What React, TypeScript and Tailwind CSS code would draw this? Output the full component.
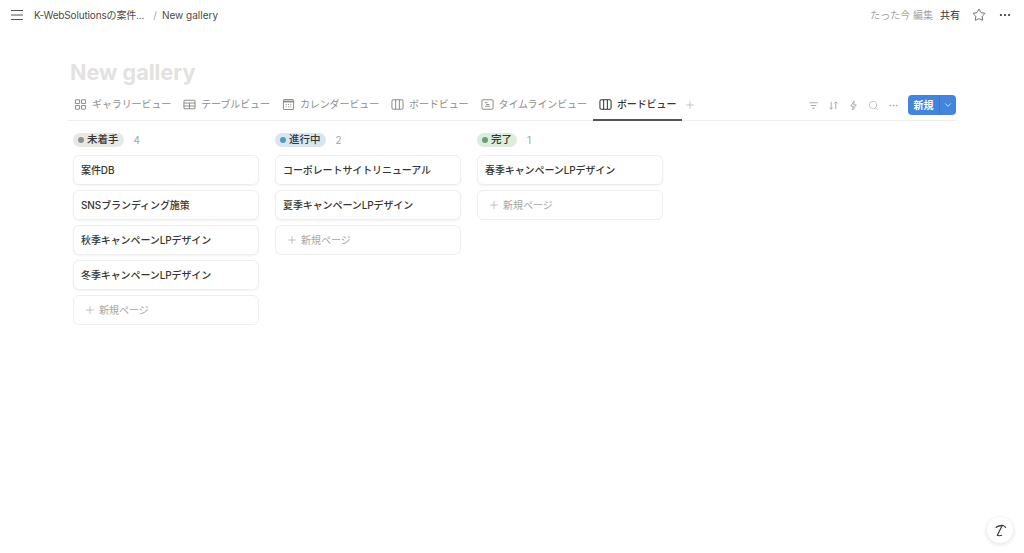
import React from "react";
import { Star, MoreHorizontal, Plus, ChevronDown, Search } from "lucide-react";

function Columns() {
  return (
    <svg viewBox="0 0 14 14" width="13" height="13" fill="none" stroke="currentColor" strokeWidth="1.1">
      <rect x="1" y="2" width="12" height="10" rx="1.6" />
      <path d="M5 2v10M9 2v10" />
    </svg>
  );
}
function Gallery() {
  return (
    <svg viewBox="0 0 14 14" width="13" height="13" fill="none" stroke="currentColor" strokeWidth="1.1">
      <rect x="1.5" y="2" width="4.5" height="4" rx="1" />
      <rect x="8" y="2" width="4.5" height="4" rx="1" />
      <rect x="1.5" y="8" width="4.5" height="4" rx="1" />
      <rect x="8" y="8" width="4.5" height="4" rx="1" />
    </svg>
  );
}
function TableIcon() {
  return (
    <svg viewBox="0 0 14 14" width="13" height="13" fill="none" stroke="currentColor" strokeWidth="1.1">
      <rect x="1" y="2.5" width="12" height="9" rx="1.4" />
      <path d="M1 5.5h12M1 8.5h12M7 5.5v6" />
    </svg>
  );
}
function Calendar() {
  return (
    <svg viewBox="0 0 14 14" width="13" height="13" fill="none" stroke="currentColor" strokeWidth="1.1">
      <rect x="1.5" y="1.5" width="11" height="11" rx="1.5" />
      <path d="M1.5 3.8h11" strokeWidth="2" />
      <path d="M4 7h1M6.5 7h1M9 7h1M4 9.5h1M6.5 9.5h1M9 9.5h1" />
    </svg>
  );
}
function Timeline() {
  return (
    <svg viewBox="0 0 14 14" width="13" height="13" fill="none" stroke="currentColor" strokeWidth="1.1">
      <rect x="1" y="2" width="12" height="10" rx="1.6" />
      <path d="M4 5h3M5.5 7h3.5M4.5 9h5" />
    </svg>
  );
}
function Filter() {
  return (
    <svg viewBox="0 0 12 12" width="11" height="11" fill="none" stroke="currentColor" strokeWidth="1">
      <path d="M1.5 3h9M3 6h6M4.5 9h3" />
    </svg>
  );
}
function Sort() {
  return (
    <svg viewBox="0 0 12 12" width="11" height="11" fill="none" stroke="currentColor" strokeWidth="1">
      <path d="M3.5 2v8M1.8 8.2 3.5 10l1.7-1.8M8.5 10V2M6.8 3.8 8.5 2l1.7 1.8" />
    </svg>
  );
}
function Bolt() {
  return (
    <svg viewBox="0 0 12 12" width="11" height="11" fill="none" stroke="currentColor" strokeWidth="1">
      <path d="M6.8 1 3 6.7h2.6L5 11l4-5.7H6.3z" />
    </svg>
  );
}
function Tab({ icon, label, active }: { icon: React.ReactNode; label: string; active?: boolean }) {
  return (
    <div className={`h-[30px] px-[6px] flex items-center gap-[5px] text-[10px] tracking-[-0.1px] border-b-2 -mb-px ${active ? "border-[#55534e] text-[#37352f] font-medium" : "border-transparent text-[#8f8e8a]"}`}>
      {icon}
      <span>{label}</span>
    </div>
  );
}
function Card({ title }: { title: string }) {
  return (
    <div className="h-[30px] rounded-[6px] border border-[#efeeec] shadow-[0_1px_2px_rgba(15,15,15,0.05)] bg-white flex items-center pl-[7px] text-[10px] font-medium tracking-[-0.1px] text-[#37352f]">
      {title}
    </div>
  );
}
function NewPage() {
  return (
    <div className="h-[30px] rounded-[6px] border border-[#efeeec] bg-white flex items-center pl-[10px] gap-[3px] text-[10px] text-[#a5a4a0]">
      <Plus size={12} strokeWidth={1.3} />
      <span>新規ページ</span>
    </div>
  );
}
function Column({ label, count, pill, dot, items }: { label: string; count: number; pill: string; dot: string; items: string[] }) {
  return (
    <div className="w-[186px] flex flex-col gap-[5px]">
      <div className="h-[20px] flex items-center">
        <div className={`h-[14px] px-[5px] rounded-full flex items-center gap-[3px] text-[10.5px] font-medium text-[#37352f] ${pill}`}>
          <span className={`w-[6px] h-[6px] rounded-full ${dot}`} />
          <span>{label}</span>
        </div>
        <span className="ml-[10px] text-[10px] text-[#a5a4a0]">{count}</span>
      </div>
      {items.map((t) => (
        <Card key={t} title={t} />
      ))}
      <NewPage />
    </div>
  );
}

export default function App() {
  return (
    <div className="w-[1024px] h-[553px] bg-white relative overflow-hidden font-['Inter','Noto_Sans_CJK_JP',sans-serif]">
      <header className="h-[30px] flex items-center pl-[11px] pr-[12px] text-[#37352f]">
        <svg viewBox="0 0 12 12" width="12" height="12" fill="none" stroke="#55534e" strokeWidth="1">
          <path d="M0 1.5h12M0 6h12M0 10.5h12" />
        </svg>
        <span className="ml-[11px] text-[10px] tracking-[-0.15px] text-[#4c4a45]">K-WebSolutionsの案件...</span>
        <span className="ml-[9px] text-[10px] text-[#a5a4a0]">/</span>
        <span className="ml-[5px] text-[10px] text-[#4c4a45]">New gallery</span>
        <div className="ml-auto flex items-center">
          <span className="text-[10px] text-[#a5a4a0]">たった今 編集</span>
          <span className="ml-[7px] text-[10px] text-[#37352f]">共有</span>
          <Star size={14} strokeWidth={1.2} className="ml-[12px]" />
          <MoreHorizontal size={14} strokeWidth={1.8} className="ml-[12px]" />
        </div>
      </header>
      <main className="pl-[68px] pr-[68px] pt-[26px]">
        <h1 className="h-[34px] pl-[2px] flex items-center text-[21.6px] font-bold text-[#e3e2e0] leading-none">New gallery</h1>
        <div className="h-[31px] border-b border-[#eeeeec] flex items-center">
          <Tab icon={<Gallery />} label="ギャラリービュー" />
          <Tab icon={<TableIcon />} label="テーブルビュー" />
          <Tab icon={<Calendar />} label="カレンダービュー" />
          <Tab icon={<Columns />} label="ボードビュー" />
          <Tab icon={<Timeline />} label="タイムラインビュー" />
          <Tab icon={<Columns />} label="ボードビュー" active />
          <Plus size={12} strokeWidth={1.2} className="ml-[2px] text-[#a5a4a0]" />
          <div className="ml-auto flex items-center gap-[9px] text-[#a5a4a0]">
            <Filter />
            <Sort />
            <Bolt />
            <Search size={11} strokeWidth={1.3} />
            <MoreHorizontal size={11} strokeWidth={1.5} />
            <div className="w-[48px] h-[20px] rounded-[4px] bg-[#4584dd] text-white flex items-center text-[10px] font-semibold">
              <span className="w-[32px] text-center border-r border-[#3a76cc] leading-[20px]">新規</span>
              <ChevronDown size={10} strokeWidth={1.8} className="ml-[3px]" />
            </div>
          </div>
        </div>
        <div className="mt-[9px] pl-[5px] flex gap-[16px]">
          <Column label="未着手" count={4} pill="bg-[#e9e8e5]" dot="bg-[#91918e]" items={["案件DB", "SNSブランディング施策", "秋季キャンペーンLPデザイン", "冬季キャンペーンLPデザイン"]} />
          <Column label="進行中" count={2} pill="bg-[#d8e6f2]" dot="bg-[#5b97bd]" items={["コーポレートサイトリニューアル", "夏季キャンペーンLPデザイン"]} />
          <Column label="完了" count={1} pill="bg-[#dbeddb]" dot="bg-[#6c9b7d]" items={["春季キャンペーンLPデザイン"]} />
        </div>
      </main>
      <div className="absolute left-[987px] top-[517px] w-[26px] h-[26px] rounded-full bg-white shadow-[0_1px_5px_rgba(15,15,15,0.14)] flex items-center justify-center">
        <svg viewBox="0 0 16 16" width="17" height="17" fill="none" stroke="#37352f" strokeWidth="1.1">
          <path d="M3.5 5.5C5 3.5 8 3 10 4M6.5 4C9 2.5 12 3 13 5.5M9 4.5 5 12.5M4.5 12.5C6 13 8 13 9.5 12.5" />
        </svg>
      </div>
    </div>
  );
}
